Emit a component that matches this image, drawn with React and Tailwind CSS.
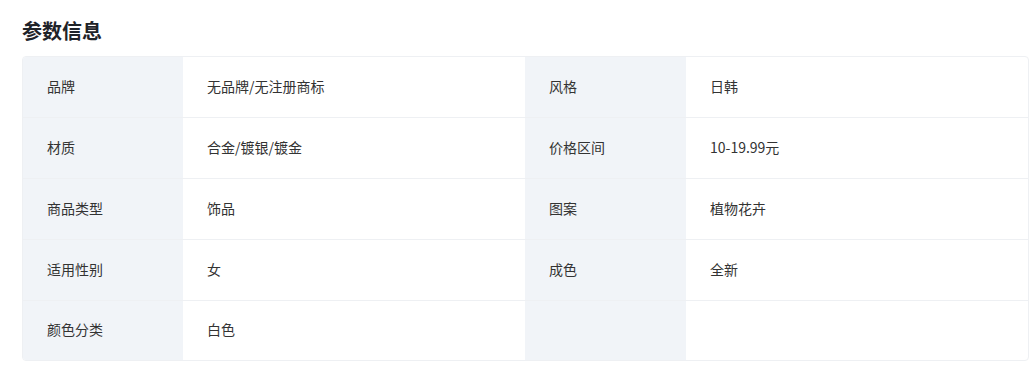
const rows = [
  ["品牌", "无品牌/无注册商标", "风格", "日韩"],
  ["材质", "合金/镀银/镀金", "价格区间", "10-19.99元"],
  ["商品类型", "饰品", "图案", "植物花卉"],
  ["适用性别", "女", "成色", "全新"],
  ["颜色分类", "白色", "", ""],
];

export default function App() {
  return (
    <div
      className="bg-white w-[1034px] h-[368px] pl-[22px] pr-[5px] pt-[17px]"
      style={{ fontFamily: '"Microsoft YaHei", "Noto Sans CJK SC", sans-serif' }}
    >
      {/* Section title */}
      <h2 className="text-[20px] leading-[28px] font-bold text-[#1f2329] mb-[11px]">参数信息</h2>

      {/* Parameter table */}
      <div className="border border-[#eef0f3] rounded-[4px] overflow-hidden">
        {rows.map(([k1, v1, k2, v2], i) => (
          <div
            key={i}
            className={`grid grid-cols-[160px_342px_161px_1fr] text-[14px] text-[#333] ${
              i < rows.length - 1 ? "h-[61px] border-b border-[#eef0f3]" : "h-[59px]"
            }`}
          >
            <div className="bg-[#f1f4f8] flex items-center pl-[24px] pb-[2px]">{k1}</div>
            <div className="flex items-center pl-[24px] pb-[2px]">{v1}</div>
            <div className="bg-[#f1f4f8] flex items-center pl-[24px] pb-[2px]">{k2}</div>
            <div className="flex items-center pl-[24px] pb-[2px]">{v2}</div>
          </div>
        ))}
      </div>
    </div>
  );
}
